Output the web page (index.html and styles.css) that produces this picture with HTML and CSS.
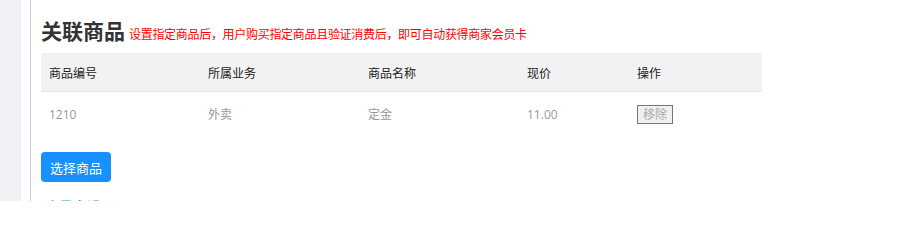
FILE: index.html
```html
<!DOCTYPE html>
<html lang="zh">
<head>
<meta charset="utf-8">
<link rel="stylesheet" href="styles.css">
</head>
<body>
<div class="layout">
  <aside class="sidebar"></aside>
  <main class="main">
    <div class="content">
      <div class="title-row">
        <h2 class="title">关联商品</h2>
        <span class="tip">设置指定商品后，用户购买指定商品且验证消费后，即可自动获得商家会员卡</span>
      </div>
      <table class="goods">
        <thead>
          <tr>
            <th class="c1">商品编号</th>
            <th class="c2">所属业务</th>
            <th class="c3">商品名称</th>
            <th class="c4">现价</th>
            <th class="c5">操作</th>
          </tr>
        </thead>
        <tbody>
          <tr>
            <td>1210</td>
            <td>外卖</td>
            <td>定金</td>
            <td>11.00</td>
            <td><button class="remove">移除</button></td>
          </tr>
        </tbody>
      </table>
      <button class="primary">选择商品</button>
      <h3 class="next">会员卡设置</h3>
    </div>
  </main>
</div>
</body>
</html>
```
FILE: styles.css
```css
html, body {
  margin: 0;
  padding: 0;
  background: #fff;
  height: 201px;
  overflow: hidden;
}
body {
  font-family: "Noto Sans CJK SC", "Noto Sans", sans-serif;
  color: #333;
}
.layout {
  display: flex;
  height: 201px;
}
.sidebar {
  width: 21px;
  flex: none;
  background: #f0f2f5;
}
.main {
  flex: 1;
  padding-left: 9px;
}
.content {
  border-left: 1px solid #c8d1e1;
  padding-left: 10px;
  padding-top: 16px;
  height: 100%;
  box-sizing: border-box;
}
.title-row {
  display: flex;
  align-items: baseline;
  height: 37px;
}
.title {
  margin: 0;
  font-size: 21px;
  font-weight: 700;
  color: #333;
  line-height: 28px;
}
.tip {
  margin-left: 4px;
  font-size: 12px;
  letter-spacing: -0.3px;
  color: #ff0000;
}
.goods {
  width: 721px;
  border-collapse: collapse;
  font-size: 12px;
}
.goods th {
  background: #f2f2f2;
  height: 38px;
  padding: 0 8px;
  text-align: left;
  font-weight: 400;
  color: #222;
  border-bottom: 1px solid #e6e6e6;
}
.goods td {
  height: 44px;
  padding: 0 8px;
  color: #999;
  font-family: "Open Sans", "Noto Sans CJK SC", sans-serif;
}
.c1 { width: 143px; }
.c2 { width: 144px; }
.c3 { width: 143px; }
.c4 { width: 94px; }
.remove {
  font-family: "Noto Sans CJK SC", sans-serif;
  font-size: 12px;
  color: #aaa;
  background: #f0f0f0;
  border: 1px solid #777;
  border-radius: 0;
  padding: 0 5px;
  height: 19px;
  line-height: 16px;
}
.primary {
  display: block;
  margin-top: 16px;
  width: 70px;
  height: 30px;
  border: none;
  border-radius: 4px;
  background: #1890ff;
  color: #fff;
  font-family: "Noto Sans CJK SC", sans-serif;
  font-size: 13px;
  padding: 0;
}
.next {
  margin: 14px 0 0 4px;
  font-size: 14px;
  font-weight: 700;
  color: #19be6b;
  line-height: 20px;
}
```
